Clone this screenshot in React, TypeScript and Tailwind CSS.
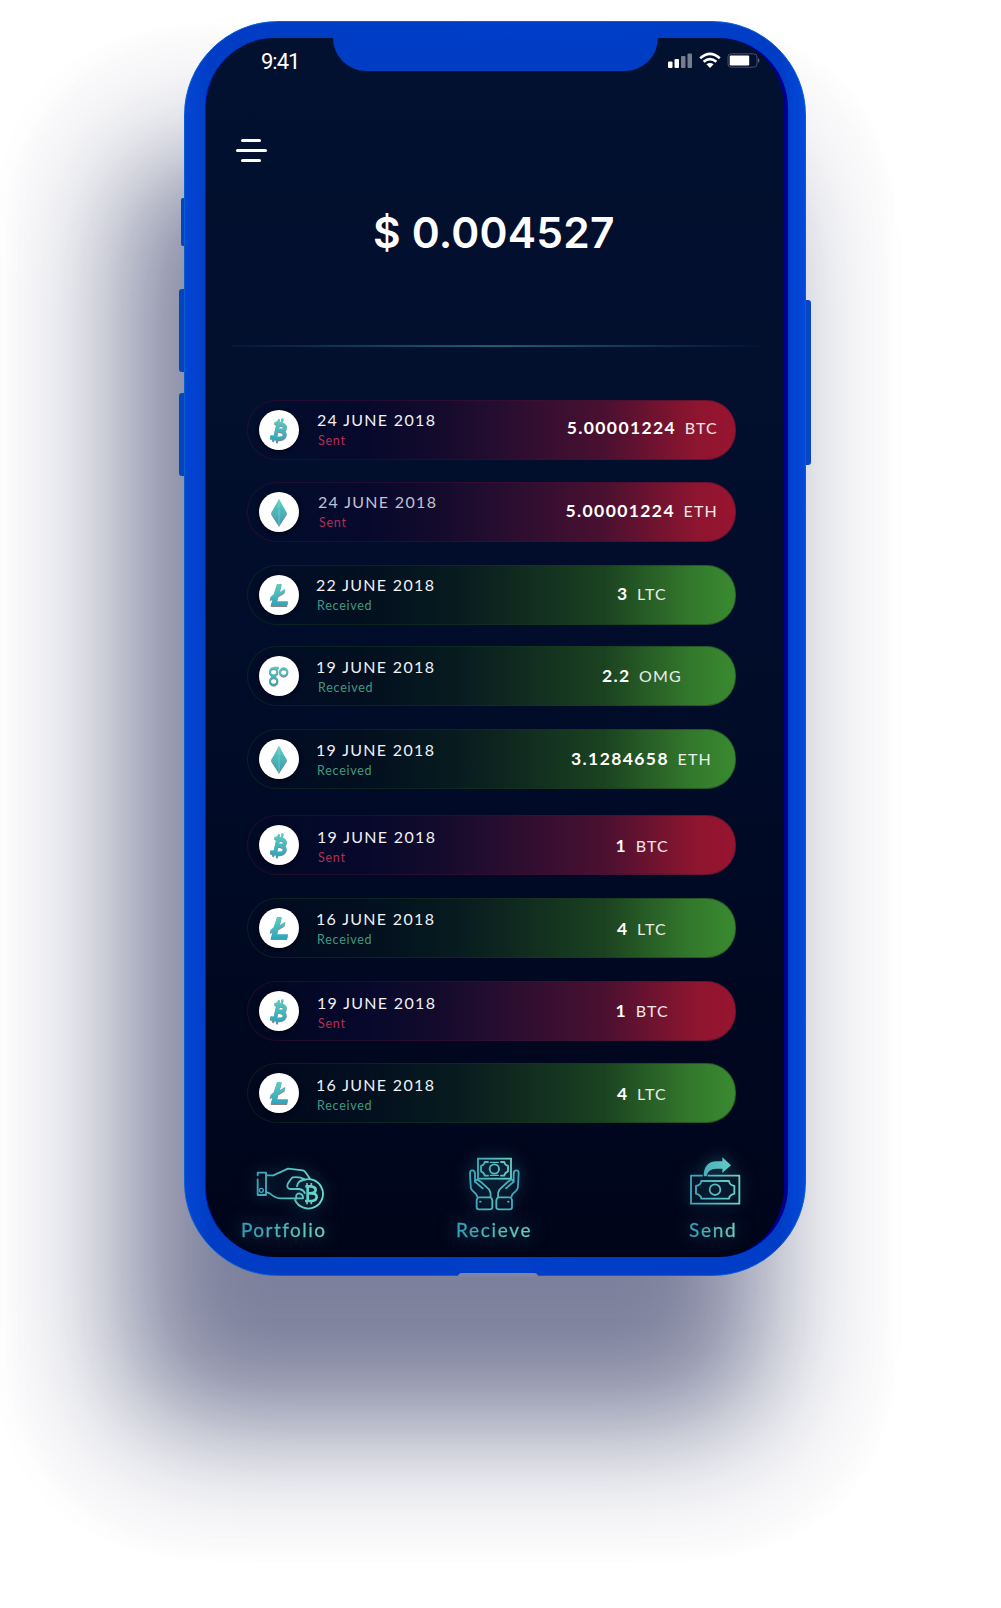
import React from "react";

type Coin = "BTC" | "ETH" | "LTC" | "OMG";

interface Transaction {
  date: string;
  sent: boolean;
  amount: string;
  coin: Coin;
  gap: string;
  inset: string;
  textShift: string;
  statusShift: string;
  dateTone: string;
}

const transactions: Transaction[] = [
  { date: "24 JUNE 2018", sent: true, amount: "5.00001224", coin: "BTC", gap: "mt-0", inset: "pr-[17px] pb-[4px]", textShift: "ml-[18px] pt-px", statusShift: "ml-px", dateTone: "text-[#f0f2f8]" },
  { date: "24 JUNE 2018", sent: true, amount: "5.00001224", coin: "ETH", gap: "mt-[22px]", inset: "pr-[17px] pb-[3px]", textShift: "ml-[19px] pt-px", statusShift: "ml-px", dateTone: "text-[#c3c2d0]" },
  { date: "22 JUNE 2018", sent: false, amount: "3", coin: "LTC", gap: "mt-[22.5px]", inset: "pr-[68px] pb-px", textShift: "ml-[17px] pt-px", statusShift: "ml-px", dateTone: "text-[#f0f2f8]" },
  { date: "19 JUNE 2018", sent: false, amount: "2.2", coin: "OMG", gap: "mt-[21.5px]", inset: "pr-[53px]", textShift: "ml-[17px] pt-[3px]", statusShift: "ml-[2px]", dateTone: "text-[#f0f2f8]" },
  { date: "19 JUNE 2018", sent: false, amount: "3.1284658", coin: "ETH", gap: "mt-[23px]", inset: "pr-[23px] pb-px", textShift: "ml-[17px] pt-[3px]", statusShift: "ml-px", dateTone: "text-[#f0f2f8]" },
  { date: "19 JUNE 2018", sent: true, amount: "1", coin: "BTC", gap: "mt-[26px]", inset: "pr-[66px] pt-px", textShift: "ml-[18px] pt-[5px]", statusShift: "ml-px", dateTone: "text-[#f0f2f8]" },
  { date: "16 JUNE 2018", sent: false, amount: "4", coin: "LTC", gap: "mt-[23px]", inset: "pr-[68px] pt-px", textShift: "ml-[17px] pt-[3px]", statusShift: "ml-px", dateTone: "text-[#f0f2f8]" },
  { date: "19 JUNE 2018", sent: true, amount: "1", coin: "BTC", gap: "mt-[23px]", inset: "pr-[66px]", textShift: "ml-[18px] pt-[4px]", statusShift: "ml-px", dateTone: "text-[#f0f2f8]" },
  { date: "16 JUNE 2018", sent: false, amount: "4", coin: "LTC", gap: "mt-[22px]", inset: "pr-[68px] pt-px", textShift: "ml-[17px] pt-[4px]", statusShift: "ml-px", dateTone: "text-[#f0f2f8]" },
];

function Gradients() {
  return (
    <svg className="absolute h-0 w-0" aria-hidden="true">
      <defs>
        <linearGradient id="coin" x1="0" y1="20" x2="0" y2="100" gradientUnits="userSpaceOnUse">
          <stop offset="0" stopColor="#62d2bf" />
          <stop offset="1" stopColor="#2b9fbd" />
        </linearGradient>
        <linearGradient id="navPortfolio" x1="75" y1="0" x2="285" y2="0" gradientUnits="userSpaceOnUse">
          <stop offset="0" stopColor="#3aa3b8" />
          <stop offset="1" stopColor="#72dcc8" />
        </linearGradient>
        <linearGradient id="nav" x1="85" y1="0" x2="240" y2="0" gradientUnits="userSpaceOnUse">
          <stop offset="0" stopColor="#3aa3b8" />
          <stop offset="1" stopColor="#6cd4c6" />
        </linearGradient>
      </defs>
    </svg>
  );
}

function CoinGlyph({ coin }: { coin: Coin }) {
  return (
    <svg viewBox="0 0 120 120" className="h-10 w-10 drop-shadow-[0_1px_0.6px_rgba(110,90,90,0.75)]">
      {coin === "BTC" && (
        <g fill="none" stroke="url(#coin)" strokeLinejoin="round">
          <path d="M50 39 L66 42 Q81 46 77 55 Q74 64 58 60 M58 60 Q80 63 77 76 Q72 88 52 84 L34 80 M58 40 L48 83" strokeWidth="11" />
          <path d="M56 41 L60 27 M67 43 L71 25 M42 93 L46 80 M53 97 L57 84 M46 38 L54 40 M33 81 L40 82" strokeWidth="6" />
        </g>
      )}
      {coin === "ETH" && (
        <g fill="url(#coin)">
          <path d="M60 21 L37 62 L60 74 L83 62Z" />
          <path d="M37 66 L60 78 L83 66 L60 101Z" />
          <path d="M37 62 L60 74 L83 62 V66 L60 78 L37 66Z" />
          <path d="M60 21 V100" stroke="#84d9c7" strokeWidth="2" />
          <path d="M38 64 L60 76 L82 64" fill="none" stroke="#8a9c9f" strokeWidth="2" />
          <path d="M38 59 L60 50 L82 59" fill="none" stroke="#4fa9a9" strokeWidth="1.4" />
        </g>
      )}
      {coin === "LTC" && (
        <path fill="url(#coin)" d="M54 27 H68 L62 51 L79 41 L76 53 L58 64 L54 79 H87 L84 93 H35 L41 71 L32 76 L35 65 L44 58Z" />
      )}
      {coin === "OMG" && (
        <g fill="none" stroke="url(#coin)" strokeWidth="6">
          <circle cx="44" cy="47" r="11" />
          <circle cx="74" cy="48" r="11" />
          <circle cx="44" cy="75" r="11" />
          <path d="M45 35 H59 M37 61 H51" strokeWidth="5" />
        </g>
      )}
    </svg>
  );
}

function TransactionRow({ item }: { item: Transaction }) {
  return (
    <li
      className={`${item.gap} flex h-[60px] w-[489px] shrink-0 items-center rounded-l-[30px] rounded-r-[29px] border bg-origin-border pl-[11px] ${
        item.sent
          ? "border-[#40103480] bg-[linear-gradient(90deg,#00091f00_0%,#07092c_25%,#150b2c_40%,#250d30_51%,#4a1030_73%,#8e152f_92%,#98142f_100%)]"
          : "border-[#12381f80] bg-[linear-gradient(90deg,#00091f00_0%,#03101f_25%,#071b1f_42%,#0d241f_51%,#1b4220_73%,#33792c_91%,#3a8a30_100%)]"
      }`}
    >
      <span className="flex h-10 w-10 shrink-0 items-center justify-center rounded-full bg-white shadow-[0_1px_4px_#000410]">
        <CoinGlyph coin={item.coin} />
      </span>
      <div className={`${item.textShift} flex flex-col`}>
        <span className={`text-[16px] leading-[20px] tracking-[1.32px] whitespace-nowrap ${item.dateTone}`}>{item.date}</span>
        <span className={`${item.statusShift} text-[12.5px] leading-[21px] tracking-[0.75px] ${item.sent ? "text-[#b52d56]" : "text-[#42997f]"}`}>
          {item.sent ? "Sent" : "Received"}
        </span>
      </div>
      <div className={`${item.inset} ml-auto flex items-baseline gap-[8.5px] whitespace-nowrap text-white`}>
        <span className="text-[17.5px] leading-6 font-bold tracking-[1.4px]">{item.amount}</span>
        <span className="text-[16px] leading-6 tracking-[1.2px] text-white/90">{item.coin}</span>
      </div>
    </li>
  );
}

function StatusBar() {
  return (
    <header className="flex h-[68px] items-start justify-between pt-[11px] pr-[24px] pl-[55px] text-white">
      <span className="pt-px font-[Roboto,sans-serif] text-[22px] leading-[24px] tracking-[-1px]">9:41</span>
      <div className="flex items-center pt-[3px]">
        <svg viewBox="0 0 24 17" className="h-[17px] w-6" fill="#fff">
          <rect x="0" y="9.5" width="4.5" height="6.5" rx="1" />
          <rect x="6.5" y="7" width="4.5" height="9" rx="1" />
          <rect x="13" y="4" width="4.5" height="12" rx="1" opacity=".45" />
          <rect x="19.5" y="1.5" width="4.5" height="14.5" rx="1" opacity=".45" />
        </svg>
        <svg viewBox="0 0 22 17" className="ml-[7px] h-[17px] w-[22px]" fill="none" stroke="#fff" strokeWidth="2.6">
          <path d="M1.2 6.2 Q11 -2.4 20.8 6.2" />
          <path d="M4.6 9.8 Q11 4.4 17.4 9.8" />
          <path d="M7.4 12.2 Q11 9.6 14.6 12.2 L11 16Z" fill="#fff" stroke="none" />
        </svg>
        <svg viewBox="0 0 33 17" className="ml-[6px] h-[17px] w-[33px]">
          <rect x="1" y="1.8" width="29" height="13.4" rx="3.2" fill="none" stroke="#8790a2" strokeOpacity=".5" />
          <rect x="2.7" y="3.5" width="19.5" height="10" rx="1.2" fill="#fff" />
          <path d="M31.2 6 Q33.6 8.5 31.2 11Z" fill="#727c91" />
        </svg>
      </div>
    </header>
  );
}

const iconGlow = "drop-shadow-[0_0_8px_rgba(50,160,175,0.5)]";
const labelStyle =
  "bg-clip-text text-[19px] leading-[24px] text-transparent [-webkit-text-stroke:0.3px_transparent] bg-gradient-to-r from-[#349db5] to-[#6cd4bd] drop-shadow-[0_0_9px_rgba(50,160,175,0.5)]";

function BottomNav() {
  return (
    <nav className="mt-[34px] flex h-[90px] w-full items-start pl-[35px]">
      <button className="flex w-[215px] flex-col items-start pt-2">
        <svg viewBox="75 75 213 138" className={`ml-[14px] h-[46px] w-[71px] ${iconGlow}`} fill="none" stroke="url(#navPortfolio)" strokeWidth="5.5" strokeLinecap="round" strokeLinejoin="round">
          <path d="M83 106 V98 H108 V165 H83 V118" />
          <circle cx="94" cy="151" r="6" strokeWidth="4" />
          <path d="M109 106 H130 L174 86 L219 91 Q224 92 228 99 L240 116" />
          <path d="M109 156 L119 160 Q136 174 150 175 H218" />
          <path d="M201 139 Q205 119 226 119 M222 117 Q211 110 188 112 Q184 114 173 132 Q169 145 180 147 H207 Q221 149 224 159" />
          <path d="M199 176 Q196 160 208 160 Q219 162 219 174" />
          <path d="M212 124 A44 44 0 1 1 195 180" />
          <path d="M226 139 H243 Q258 141 257 151 Q255 160 241 160 M232 160 H246 Q261 161 260 172 Q257 183 243 183 H225 M233 140 V182" strokeWidth="8" strokeLinecap="butt" />
          <path d="M231 129 V138 M244 129 V138 M231 183 V193 M244 183 V193" strokeWidth="5" strokeLinecap="butt" />
        </svg>
        <span className={`mt-[7px] tracking-[1.45px] ${labelStyle}`}>Portfolio</span>
      </button>
      <button className="flex w-[233px] flex-col items-start">
        <svg viewBox="84 51 156 162" className={`ml-[12px] h-[54px] w-[52px] ${iconGlow}`} fill="none" stroke="url(#nav)" strokeWidth="5.5" strokeLinecap="round" strokeLinejoin="round">
          <rect x="114" y="56" width="99" height="60" strokeLinejoin="miter" />
          <path d="M144 66 H134 Q133 75 123 78 V94 Q133 98 134 107 H144 M183 66 H193 Q194 75 204 78 V94 Q194 98 193 107 H183" />
          <path d="M151 67 H175 M151 106 H175" strokeWidth="4" />
          <circle cx="163" cy="87" r="14" />
          <path d="M112 170 Q110 163 104 158 Q91 149 92 137 L90 100 Q90 90 98 91 Q105 92 105 102 V125 L128 145" />
          <path d="M106 127 Q104 119 113 119 L122 125 L147 148 Q153 156 152 169" />
          <path d="M117 172 H151 Q156 175 157 181 V202 Q156 208 149 208 H117 Q110 208 110 201 V180 Q111 173 117 172Z" />
          <path d="M120 185 H122" />
          <g transform="translate(326 0) scale(-1 1)">
            <path d="M112 170 Q110 163 104 158 Q91 149 92 137 L90 100 Q90 90 98 91 Q105 92 105 102 V125 L128 145" />
            <path d="M106 127 Q104 119 113 119 L122 125 L147 148 Q153 156 152 169" />
            <path d="M117 172 H151 Q156 175 157 181 V202 Q156 208 149 208 H117 Q110 208 110 201 V180 Q111 173 117 172Z" />
            <path d="M120 185 H122" />
          </g>
        </svg>
        <span className={`mt-[7px] tracking-[1.7px] ${labelStyle}`}>Recieve</span>
      </button>
      <button className="flex flex-col items-start">
        <svg viewBox="87 51 156 147" className={`h-[49px] w-[52px] ${iconGlow}`} fill="none" stroke="url(#nav)" strokeWidth="5.5" strokeLinejoin="round">
          <path d="M128 107 H93 V191 H238 V107 H143" />
          <path d="M124 123 H207 Q208 135 223 138 V161 Q208 165 207 176 H124 Q123 165 108 161 V138 Q123 135 124 123Z" />
          <circle cx="165" cy="149" r="16" />
          <path d="M131 109 Q131 65 170 64 H187 V52 L213 76 L187 99 V86 H169 Q143 86 140 109Z" fill="url(#nav)" stroke="none" />
        </svg>
        <span className={`mt-[12px] tracking-[1.7px] ${labelStyle}`}>Send</span>
      </button>
    </nav>
  );
}

export default function App() {
  return (
    <main className="h-[1608px] w-[1001px] overflow-hidden bg-white font-[Lato,sans-serif]">
      <Gradients />
      <div className="relative mt-[21px] ml-[184px] h-[1255px] w-[622px] rounded-[94px]">
        <div className="absolute top-[10px] left-[-172px] h-[1520px] w-[876px] rounded-[190px] bg-[#fbfbfc] blur-[8px]" />
        <div className="absolute top-[138px] left-[-60px] h-[1266px] w-[640px] rounded-[60px] bg-[#070f43] opacity-[.52] blur-[62px]" />
        <span className="absolute top-[177px] left-[-3px] h-[48px] w-2 rounded-l-[2px] bg-[#0644bb]" />
        <span className="absolute top-[268px] left-[-5px] h-[83px] w-3 rounded-l-[3px] bg-[#0644bb]" />
        <span className="absolute top-[372px] left-[-5px] h-[83px] w-3 rounded-l-[3px] bg-[#0644bb]" />
        <span className="absolute top-[279px] right-[-5px] h-[165px] w-3 rounded-r-[3px] bg-[#0645c4]" />
        <div className="relative h-full w-full rounded-[94px] border border-[#0860d0] bg-[linear-gradient(90deg,#0346d5_0%,#003dc4_4%,#003dc8_50%,#003dc7_96%,#0348da_100%)] pt-[16px] pl-[20px]">
          <section className="relative flex h-[1219px] w-[583px] flex-col overflow-hidden rounded-[70px] border-r-[4px] border-l border-r-[#00008c] border-l-[#001899] bg-[linear-gradient(180deg,#021130_0%,#020f2d_30%,#000b27_60%,#00051a_100%)]">
            <div className="absolute top-0 left-[127px] h-[33px] w-[325px] rounded-b-[34px] bg-[#003dc5]" />
            <StatusBar />
            <button aria-label="Menu" className="mt-[32.5px] ml-[29.5px] flex w-[31px] flex-col items-center gap-[7px]">
              <span className="h-[3px] w-5 rounded-full bg-white" />
              <span className="h-[3px] w-[31px] rounded-full bg-white" />
              <span className="h-[3px] w-5 rounded-full bg-white" />
            </button>
            <h1 className="mt-[45.5px] w-full pl-[167px] font-[Inter,sans-serif] text-[42.5px] leading-[52px] font-semibold tracking-[0.2px] whitespace-nowrap text-white">
              $ 0.004527
            </h1>
            <div className="mt-[86px] ml-[26px] h-[2px] w-[527px] shrink-0 bg-[linear-gradient(90deg,#164a5d20,#205e73_50%,#164a5d10)]" />
            <ul className="mt-[53px] ml-[41px] flex flex-col">
              {transactions.map((item, i) => (
                <TransactionRow key={i} item={item} />
              ))}
            </ul>
            <BottomNav />
          </section>
          <div className="absolute bottom-[-2px] left-[273px] h-[4px] w-[80px] rounded-t-[4px] bg-[#8084a0]" />
        </div>
      </div>
    </main>
  );
}
